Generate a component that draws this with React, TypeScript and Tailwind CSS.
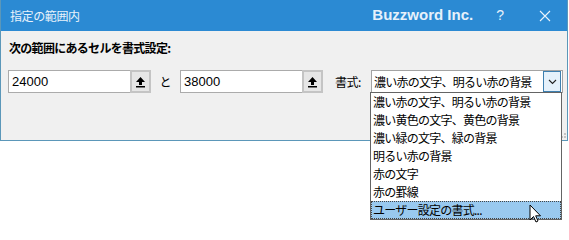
import React from "react";

const jp = { fontFamily: '"Noto Sans CJK JP", "Noto Sans", sans-serif' };

function UpButton() {
  return (
    <div className="w-[21px] h-[23px] border-2 border-[#c4c4c4] bg-[#e6e6e6] flex items-center justify-center">
      <svg width="11" height="12" viewBox="0 0 11 12">
        <path d="M5.5 1 L10 6 L7 6 L7 9 L4 9 L4 6 L1 6 Z" fill="#000" />
        <rect x="1" y="10" width="9" height="1.5" fill="#000" />
      </svg>
    </div>
  );
}

function NumInput({ value }: { value: string }) {
  return (
    <div className="flex w-[143px] h-[23px] bg-white border border-[#ababab]">
      <div
        className="flex-1 flex items-center pl-[3px] text-[13px] text-black"
        style={{ fontFamily: '"Liberation Sans", Arial, sans-serif' }}
      >
        {value}
      </div>
      <div className="-mt-px -mb-px -mr-px">
        <UpButton />
      </div>
    </div>
  );
}

const items = [
  "濃い赤の文字、明るい赤の背景",
  "濃い黄色の文字、黄色の背景",
  "濃い緑の文字、緑の背景",
  "明るい赤の背景",
  "赤の文字",
  "赤の罫線",
  "ユーザー設定の書式...",
];

export default function App() {
  return (
    <div className="relative w-[569px] h-[240px] bg-white overflow-hidden" style={jp}>
      <div className="w-[568px] h-[141px] flex flex-col border-l border-r border-b border-[#5b97b9]">
        <div className="h-[31px] bg-[#2b8ad3] flex items-center text-white shrink-0">
          <div className="pl-[9px] text-[12px] tracking-[-0.4px] text-[#e8f2fb]">指定の範囲内</div>
          <div className="flex-1" />
          <div
            className="text-[15px] font-bold text-[#e6f1fb] mr-[23px]"
            style={{ fontFamily: '"Liberation Sans", Arial, sans-serif' }}
          >
            Buzzword Inc.
          </div>
          <div
            className="text-[14px] text-[#e6f1fb] mr-[35px]"
            style={{ fontFamily: '"Liberation Sans", Arial, sans-serif' }}
          >
            ?
          </div>
          <svg width="12" height="12" viewBox="0 0 12 12" className="mr-[16px]">
            <path d="M1 1 L11 11 M11 1 L1 11" stroke="#eaf3fb" strokeWidth="1.1" />
          </svg>
        </div>
        <div className="flex-1 bg-[#f0f0f0] relative">
          <div className="pl-[8px] pt-[8px] text-[12px] font-bold text-black tracking-[-0.7px]">
            次の範囲にあるセルを書式設定:
          </div>
          <div className="flex items-center mt-[13px] pl-[7px]">
            <NumInput value="24000" />
            <div className="w-[29px] text-center text-[12px] text-black">と</div>
            <NumInput value="38000" />
            <div className="w-[48px] text-center text-[12px] text-black tracking-[-0.5px] pl-[2px]">書式:</div>
            <div className="w-[192px] h-[23px] bg-white border border-[#a3a3a3] flex items-center">
              <div className="flex-1 pl-[2px] text-[12px] text-black tracking-[-0.75px] whitespace-nowrap overflow-hidden">
                濃い赤の文字、明るい赤の背景
              </div>
              <div className="w-[18px] h-[21px] border border-[#3d7fb0] bg-[#e5f1fb] flex items-center justify-center mr-px">
                <svg width="9" height="6" viewBox="0 0 9 6">
                  <path d="M1 1 L4.5 4.5 L8 1" stroke="#222" strokeWidth="1.1" fill="none" />
                </svg>
              </div>
            </div>
          </div>
          <div className="absolute right-[1px] bottom-[2px] grid grid-cols-2 gap-px">
            <div className="w-[1px] h-[1px]" />
            <div className="w-[2px] h-[2px] bg-[#c4c4c4]" />
            <div className="w-[2px] h-[2px] bg-[#c4c4c4]" />
            <div className="w-[2px] h-[2px] bg-[#c4c4c4]" />
          </div>
        </div>
      </div>

      <div className="absolute left-[370px] top-[92px] w-[192px] h-[128px] bg-white border border-[#646464] flex flex-col">
        {items.map((t, i) => (
          <div
            key={i}
            className={
              i === items.length - 1
                ? "h-[18px] flex items-center pl-[1px] text-[12px] tracking-[-0.75px] text-black bg-[#99c9ef] border border-dotted border-[#444]"
                : "h-[18px] flex items-center pl-[2px] text-[12px] tracking-[-0.75px] text-black"
            }
          >
            {t}
          </div>
        ))}
      </div>

      <svg className="absolute left-[529px] top-[204px]" width="14" height="20" viewBox="0 0 14 20">
        <path d="M1 1 L1 16 L4.5 12.5 L7 18 L9 17 L6.7 11.8 L11.5 11.8 Z" fill="#fff" stroke="#000" strokeWidth="1" />
      </svg>
    </div>
  );
}
